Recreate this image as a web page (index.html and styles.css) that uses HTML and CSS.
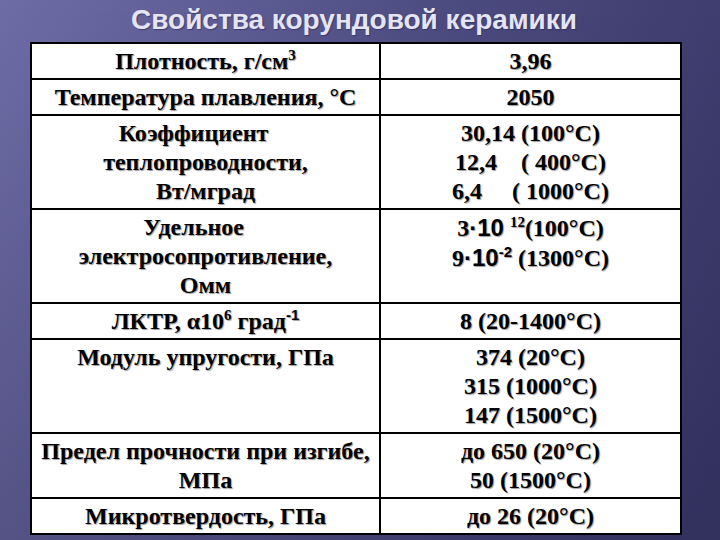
FILE: index.html
```html
<!DOCTYPE html>
<html lang="ru">
<head>
<meta charset="utf-8">
<title>Свойства корундовой керамики</title>
<link rel="stylesheet" href="styles.css">
</head>
<body>
<div class="slide">
  <h1 class="title">Свойства корундовой керамики</h1>
  <table class="props">
    <colgroup><col class="c1"><col class="c2"></colgroup>
    <tr>
      <td>Плотность, г/см<sup>3</sup></td>
      <td>3,96</td>
    </tr>
    <tr>
      <td>Температура плавления, °С</td>
      <td>2050</td>
    </tr>
    <tr>
      <td><span class="shift">Коэффициент</span><br>теплопроводности,<br>Вт/мград</td>
      <td><span class="pre">30,14 (100°C)<br>12,4    ( 400°C)<br>6,4     ( 1000°C)</span></td>
    </tr>
    <tr>
      <td><span class="shift">Удельное</span><br>электросопротивление,<br>Омм</td>
      <td>3<span class="sans">·10</span> <sup>12</sup>(100°C)<br>9<span class="sans">·10</span><sup class="sans">-2</sup> (1300°C)</td>
    </tr>
    <tr>
      <td>ЛКТР, α10<sup>6</sup> град<sup class="sans">-1</sup></td>
      <td>8 (20-1400°C)</td>
    </tr>
    <tr>
      <td>Модуль упругости, ГПа</td>
      <td>374 (20°C)<br>315 (1000°C)<br>147 (1500°C)</td>
    </tr>
    <tr>
      <td>Предел прочности при изгибе,<br>МПа</td>
      <td>до 650 (20°C)<br>50 (1500°C)</td>
    </tr>
    <tr>
      <td>Микротвердость, ГПа</td>
      <td>до 26 (20°C)</td>
    </tr>
  </table>
</div>
</body>
</html>
```
FILE: styles.css
```css
html, body {
  margin: 0;
  padding: 0;
}
body {
  width: 720px;
  height: 540px;
  overflow: hidden;
  background:
    linear-gradient(to bottom, rgba(0,0,0,0) 0%, rgba(10,8,40,0.25) 100%),
    linear-gradient(to right, #6d6ca5 0%, #5e5d95 30%, #4b4a7f 65%, #3f3d6e 100%);
}
.slide {
  width: 720px;
  height: 540px;
  display: flex;
  flex-direction: column;
  align-items: flex-start;
}
.title {
  margin: 0;
  width: 708px;
  height: 42px;
  line-height: 40px;
  text-align: center;
  font-family: "Liberation Sans", Arial, sans-serif;
  font-weight: bold;
  font-size: 28px;
  color: #e4e4f2;
  text-shadow: 1px 1px 1px rgba(40,40,80,0.6);
}
.props {
  margin-left: 30px;
  width: 650px;
  border-collapse: collapse;
  background: #ffffff;
  table-layout: fixed;
  font-family: "Liberation Serif", "Times New Roman", serif;
  font-weight: bold;
  font-size: 24px;
  line-height: 29px;
  color: #000;
}
.c1 { width: 349px; }
.c2 { width: 301px; }
.props td {
  border: 2px solid #000;
  padding: 3px 1px 2px 1px;
  text-align: center;
  vertical-align: top;
  text-shadow: 1px 1px 1px #9a9a9a;
}
.props sup {
  font-size: 15px;
  line-height: 0;
  vertical-align: 9px;
}
.sans {
  font-family: "Liberation Sans", Arial, sans-serif;
}
.pre {
  white-space: pre;
}
.shift {
  position: relative;
  left: -12px;
}
```
